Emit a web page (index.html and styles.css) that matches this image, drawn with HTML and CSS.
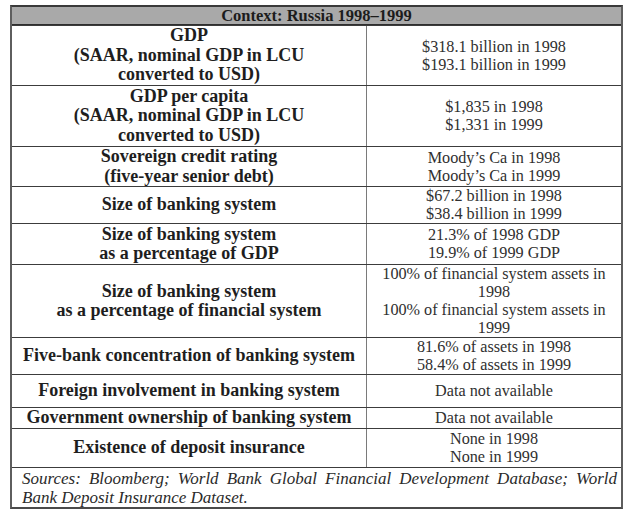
FILE: index.html
```html
<!DOCTYPE html>
<html lang="en">
<head>
<meta charset="utf-8">
<title>Context: Russia 1998–1999</title>
<link rel="stylesheet" href="styles.css">
</head>
<body>
<div class="ctx">
  <div class="head">Context: Russia 1998–1999</div>

  <div class="lbl">GDP<br>(SAAR, nominal GDP in LCU<br>converted to USD)</div>
  <div class="val">$318.1 billion in 1998<br>$193.1 billion in 1999</div>

  <div class="lbl">GDP per capita<br>(SAAR, nominal GDP in LCU<br>converted to USD)</div>
  <div class="val">$1,835 in 1998<br>$1,331 in 1999</div>

  <div class="lbl">Sovereign credit rating<br>(five-year senior debt)</div>
  <div class="val">Moody’s Ca in 1998<br>Moody’s Ca in 1999</div>

  <div class="lbl">Size of banking system</div>
  <div class="val">$67.2 billion in 1998<br>$38.4 billion in 1999</div>

  <div class="lbl">Size of banking system<br>as a percentage of GDP</div>
  <div class="val">21.3% of 1998 GDP<br>19.9% of 1999 GDP</div>

  <div class="lbl">Size of banking system<br>as a percentage of financial system</div>
  <div class="val">100% of financial system assets in 1998<br>100% of financial system assets in 1999</div>

  <div class="lbl">Five-bank concentration of banking system</div>
  <div class="val">81.6% of assets in 1998<br>58.4% of assets in 1999</div>

  <div class="lbl">Foreign involvement in banking system</div>
  <div class="val">Data not available</div>

  <div class="lbl">Government ownership of banking system</div>
  <div class="val">Data not available</div>

  <div class="lbl">Existence of deposit insurance</div>
  <div class="val">None in 1998<br>None in 1999</div>

  <div class="src">Sources: Bloomberg; World Bank Global Financial Development Database; World Bank Deposit Insurance Dataset.</div>
</div>
</body>
</html>
```
FILE: styles.css
```css
html, body {
  margin: 0;
  padding: 0;
  background: #ffffff;
}

body {
  padding: 5px 0 0 10px;
  font-family: "Liberation Serif", "Times New Roman", serif;
  color: #222222;
}

.ctx {
  display: grid;
  width: 609px;
  grid-template-columns: 354px 254px;
  grid-template-rows: 18px 59px 60px 39px 36px 40px 72px 36px 32px 20px 38px 39px;
  gap: 1px;
  background: #3c3c3c;
  border: 2px solid #5e5e5e;
  border-top-color: #3a3a3a;
  border-bottom-color: #4a4a4a;
}

.head {
  grid-column: 1 / -1;
  background: #a9a9a9;
  border-bottom: 1px solid #2e2e2e;
  font-weight: bold;
  font-size: 16.5px;
  line-height: 17px;
  text-align: center;
  color: #1c1c1c;
}

.lbl,
.val,
.src {
  background: #ffffff;
  display: flex;
  flex-direction: column;
  justify-content: center;
}

.lbl {
  font-weight: bold;
  font-size: 18px;
  line-height: 19.5px;
  text-align: center;
  color: #1e1e1e;
}

.val {
  font-size: 16.2px;
  line-height: 18px;
  text-align: center;
  color: #303030;
  border-left: 1px solid #7a7a7a;
  margin-left: -1px;
}

.src {
  grid-column: 1 / -1;
  display: block;
  padding: 1px 4px 0 10px;
  font-style: italic;
  font-size: 17px;
  line-height: 19px;
  text-align: justify;
  color: #2a2a2a;
}
```
